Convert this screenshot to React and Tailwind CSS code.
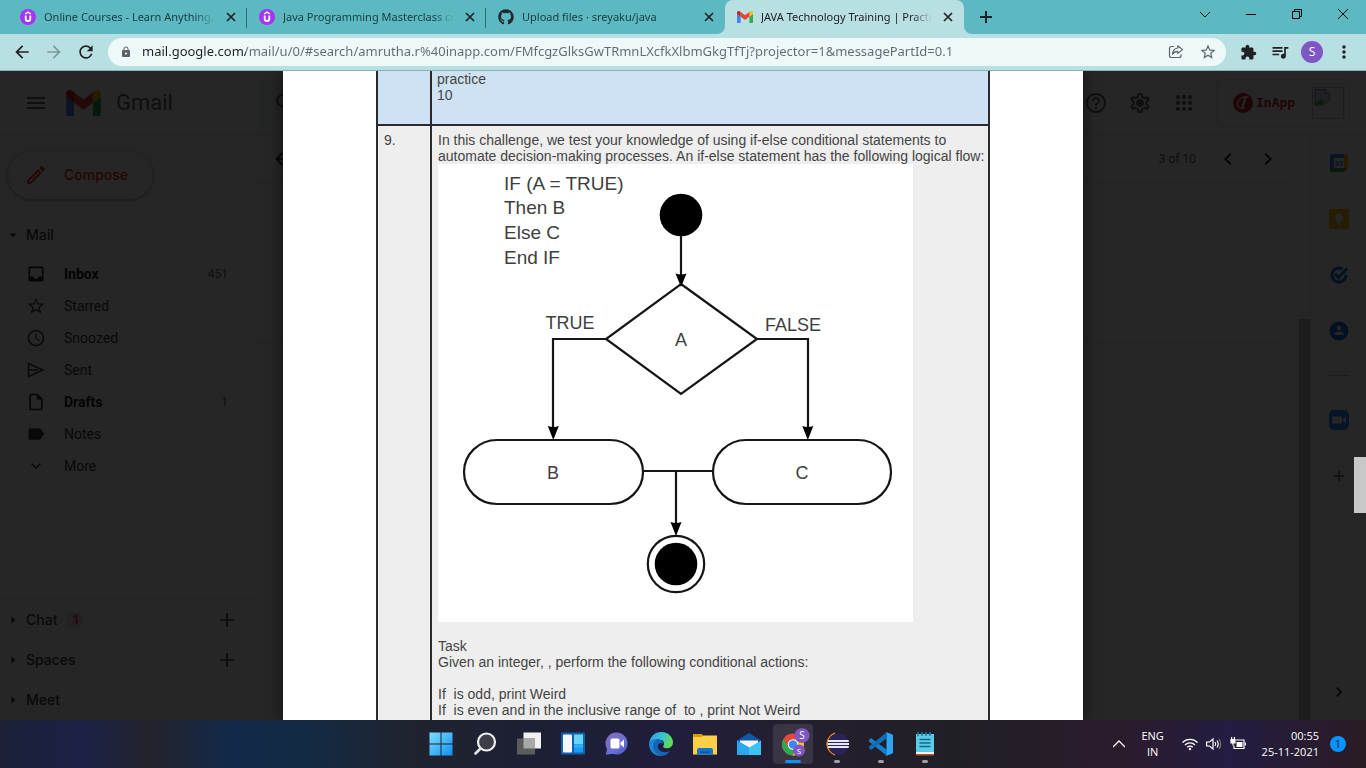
import React from "react";
import { FaGithub } from "react-icons/fa";
import {
  MdMenu, MdSearch, MdArrowBack, MdArrowForward, MdRefresh, MdLock, MdStarBorder, MdExtension,
  MdQueueMusic, MdMoreVert, MdAdd, MdInbox, MdAccessTime, MdOutlineInsertDriveFile, MdLabel,
  MdExpandMore, MdHelpOutline, MdOutlineSettings, MdChevronLeft, MdChevronRight, MdOutlineEdit,
  MdArrowRight, MdArrowDropDown,
} from "react-icons/md";

function UdemyIcon() {
  return (
    <svg viewBox="0 0 16 16" className="h-4 w-4 shrink-0" aria-hidden="true">
      <circle cx="8" cy="8" r="8" fill="#a435f0" />
      <path d="M5.2 5 8 3.2 10.8 5" fill="none" stroke="#fff" strokeWidth="1.4" />
      <path d="M5.7 6.4v3.4a2.3 2.3 0 0 0 4.6 0V6.4" fill="none" stroke="#fff" strokeWidth="1.8" />
    </svg>
  );
}

function GmailLogo({ className }) {
  return (
    <svg viewBox="52 42 88 66" className={className} aria-hidden="true">
      <path fill="#4285f4" d="M58 108h14V74L52 59v43c0 3.32 2.69 6 6 6" />
      <path fill="#34a853" d="M120 108h14c3.32 0 6-2.69 6-6V59l-20 15" />
      <path fill="#fbbc04" d="M120 48v26l20-15v-8c0-7.42-8.47-11.65-14.4-7.2" />
      <path fill="#ea4335" d="M72 74V48l24 18 24-18v26L96 92" />
      <path fill="#c5221f" d="M52 51v8l20 15V48l-5.6-4.2c-5.94-4.45-14.4-.22-14.4 7.2" />
    </svg>
  );
}

const TABS = [
  { title: "Online Courses - Learn Anything,", icon: <UdemyIcon /> },
  { title: "Java Programming Masterclass co", icon: <UdemyIcon /> },
  { title: "Upload files · sreyaku/java", icon: <FaGithub className="h-4 w-4 shrink-0 text-[#24292f]" /> },
  { title: "JAVA Technology Training | Practi", icon: <GmailLogo className="h-3 w-4 shrink-0" />, active: true },
];

function TabStrip() {
  return (
    <div className="flex h-[34px] shrink-0 bg-[#5cb8c1] pl-2">
      {TABS.map((t, i) => (
        <div
          key={i}
          className={
            "relative flex w-[239px] items-center gap-2 pr-2 pl-3 " +
            (t.active ? "rounded-t-lg bg-[#b8e0e3] text-[#202124]" : "text-[#173c40]")
          }
        >
          {t.icon}
          <span className="min-w-0 flex-1 overflow-hidden text-[11px] leading-4 whitespace-nowrap [font-family:'Noto_Sans',sans-serif] [mask-image:linear-gradient(to_right,black_88%,transparent)]">
            {t.title}
          </span>
          <button aria-label="Close tab" className="flex h-4 w-4 items-center justify-center text-[#202124]">
            <svg viewBox="0 0 10 10" className="h-[10px] w-[10px]" fill="none" stroke="currentColor" strokeWidth="1.7"><path d="M1 1l8 8M9 1L1 9" /></svg>
          </button>
          {i < 2 && <span className="absolute top-2 right-0 h-5 w-px bg-[#2f6b72]" />}
          {t.active && (
            <>
              <svg viewBox="0 0 8 8" className="absolute bottom-0 -left-2 h-2 w-2" fill="#b8e0e3"><path d="M8 0v8H0a8 8 0 0 0 8-8z" /></svg>
              <svg viewBox="0 0 8 8" className="absolute -right-2 bottom-0 h-2 w-2" fill="#b8e0e3"><path d="M0 0v8h8a8 8 0 0 1-8-8z" /></svg>
            </>
          )}
        </div>
      ))}
      <button aria-label="New tab" className="ml-3 flex w-5 items-center justify-center text-[#202124]">
        <svg viewBox="0 0 12 12" className="h-3 w-3" fill="none" stroke="currentColor" strokeWidth="2"><path d="M6 0v12M0 6h12" /></svg>
      </button>
      <div className="ml-auto flex text-black">
        <button aria-label="Search tabs" className="flex h-7 w-[46px] items-center justify-center">
          <svg viewBox="0 0 12 12" className="h-3 w-3" fill="none" stroke="currentColor"><path d="M1 4l5 5 5-5" /></svg>
        </button>
        <button aria-label="Minimize" className="flex h-7 w-[46px] items-center justify-center">
          <svg viewBox="0 0 10 10" className="h-[10px] w-[10px]" fill="none" stroke="currentColor"><path d="M0 5.5h10" /></svg>
        </button>
        <button aria-label="Restore" className="flex h-7 w-[46px] items-center justify-center">
          <svg viewBox="0 0 10 10" className="h-[10px] w-[10px]" fill="none" stroke="currentColor"><path d="M.5 2.5h7v7h-7zM2.5 2.5v-2h7v7h-2" /></svg>
        </button>
        <button aria-label="Close window" className="flex h-7 w-[46px] items-center justify-center">
          <svg viewBox="0 0 10 10" className="h-[10px] w-[10px]" fill="none" stroke="currentColor"><path d="M0 0l10 10M10 0L0 10" /></svg>
        </button>
      </div>
    </div>
  );
}

function BarButton({ label, children }) {
  return (
    <button aria-label={label} className="flex h-7 w-8 shrink-0 items-center justify-center text-[#202124]">
      {children}
    </button>
  );
}

function Toolbar() {
  return (
    <div className="flex h-[37px] shrink-0 items-center border-b border-[#86b3b6] bg-[#b8e0e3] px-[6px]">
      <BarButton label="Back"><MdArrowBack className="h-5 w-5" /></BarButton>
      <BarButton label="Forward"><MdArrowForward className="h-5 w-5 text-[#7f999b]" /></BarButton>
      <BarButton label="Reload"><MdRefresh className="h-5 w-5" /></BarButton>
      <div className="mx-[6px] flex h-7 min-w-0 flex-1 items-center rounded-full bg-[#edf8f9] pr-[2px] pl-3 text-[#5f6368]">
        <MdLock className="h-3 w-3 shrink-0" />
        <input
          aria-label="Address"
          readOnly
          value="mail.google.com/mail/u/0/#search/amrutha.r%40inapp.com/FMfcgzGlksGwTRmnLXcfkXlbmGkgTfTj?projector=1&messagePartId=0.1"
          className="ml-[10px] min-w-0 flex-1 bg-[linear-gradient(to_right,#202124_104px,#5f6b6e_104px)] bg-clip-text text-[13px] text-transparent outline-none [font-family:'Noto_Sans',sans-serif]"
        />
        <BarButton label="Share this page">
          <svg viewBox="0 0 16 16" className="h-4 w-4" fill="none" stroke="#5f6368" strokeWidth="1.2" strokeLinejoin="round">
            <path d="M6 2.5H3.5a2 2 0 0 0-2 2v7a2 2 0 0 0 2 2h7.500a2 2 0 0 0 2-2V10.500" />
            <path d="M9.800 1.800 14.500 5.600 9.800 9.400V7.300C7.200 7.300 5.600 8.200 4.500 10.200c.3-3.200 2-5.800 5.300-6.200z" />
          </svg>
        </BarButton>
        <BarButton label="Bookmark"><MdStarBorder className="h-[18px] w-[18px] text-[#5f6368]" /></BarButton>
      </div>
      <BarButton label="Extensions"><MdExtension className="h-[17px] w-[17px]" /></BarButton>
      <BarButton label="Media controls"><MdQueueMusic className="h-5 w-5" /></BarButton>
      <BarButton label="Profile">
        <span className="flex h-[22px] w-[22px] items-center justify-center rounded-full bg-[#7e57c2] text-xs text-white">S</span>
      </BarButton>
      <BarButton label="Menu"><MdMoreVert className="h-5 w-5" /></BarButton>
    </div>
  );
}

function SentIcon({ className }) {
  return (
    <svg viewBox="0 0 20 20" className={className} fill="none" stroke="currentColor" strokeWidth="1.600">
      <path d="M2.500 3.500 17 10 2.500 16.500zM2.500 10H12" />
    </svg>
  );
}

const FOLDERS = [
  { name: "Inbox", Icon: MdInbox, count: 451, bold: true },
  { name: "Starred", Icon: MdStarBorder },
  { name: "Snoozed", Icon: MdAccessTime },
  { name: "Sent", Icon: SentIcon },
  { name: "Drafts", Icon: MdOutlineInsertDriveFile, count: 1, bold: true },
  { name: "Notes", Icon: MdLabel },
  { name: "More", Icon: MdExpandMore },
];

const SECTIONS = [
  { name: "Chat", badge: 1, add: true },
  { name: "Spaces", add: true },
  { name: "Meet" },
];

function GmailHeader() {
  return (
    <header className="flex h-16 shrink-0 items-center border-b border-[#e8eaed] pr-4 pl-6 text-[#5f6368]">
      <button aria-label="Main menu"><MdMenu className="h-6 w-6" /></button>
      <GmailLogo className="ml-[18px] h-[26px] w-[35px]" />
      <span className="ml-[15px] text-[22px] leading-6 [font-family:Roboto,sans-serif]">Gmail</span>
      <label className="ml-21 flex h-12 w-[720px] items-center gap-2 rounded-lg bg-[#f1f3f4] pl-4">
        <MdSearch className="h-6 w-6" />
        <input aria-label="Search mail" className="min-w-0 flex-1 outline-none" />
      </label>
      <div className="ml-auto flex items-center gap-5">
        <button aria-label="Support"><MdHelpOutline className="h-6 w-6" /></button>
        <button aria-label="Settings">
          <svg viewBox="0 0 24 24" className="h-6 w-6"><MdOutlineSettings size={24} /><circle cx="12" cy="12" r="3.500" fill="currentColor" /></svg>
        </button>
        <button aria-label="Google apps">
          <svg viewBox="0 0 24 24" className="h-6 w-6" fill="currentColor">
            {[6, 12, 18].map((y) => [6, 12, 18].map((x) => <circle key={x + "-" + y} cx={x} cy={y} r="2" />))}
          </svg>
        </button>
      </div>
      <div className="ml-5 flex h-12 w-[134px] items-center justify-between rounded-lg border border-[#e0e2e5] pr-[5px] pl-4">
        <span className="flex items-center gap-[3px] text-[#c4262d]">
          <svg viewBox="0 0 20 20" className="h-5 w-5">
            <circle cx="10" cy="10" r="10" fill="#c4262d" />
            <path d="M15.500 4.500C11 2 4.500 6 4.500 11c0 4 4 5.500 7.500 3.500" fill="none" stroke="#fff" strokeWidth="1.200" />
            <path d="M11.500 7.500 9.500 14M12.300 4.500l-.3 1.200" stroke="#fff" strokeWidth="2.200" strokeLinecap="round" />
          </svg>
          <span className="text-[13px] font-bold [font-family:'DejaVu_Sans_Mono',monospace]">InApp</span>
        </span>
        <svg viewBox="0 0 32 32" className="h-8 w-8" role="img" aria-label="Profile photo">
          <path d="M.5.5h31v31H.5z" fill="none" stroke="#c0c0c0" />
          <path d="M3 2.500h10.500l4 4V13l-6 5H3z" fill="#c5d7f2" stroke="#888" />
          <path d="M3.500 17.500c2-5 6-6 9-3l-3 3z" fill="#4caf3c" />
          <path d="M13.500 2.500v4h4" fill="#fff" stroke="#888" />
        </svg>
      </div>
    </header>
  );
}

function Sidebar() {
  return (
    <nav className="flex w-64 shrink-0 flex-col text-[#3c4043] [font-family:Roboto,sans-serif]">
      <button className="mt-4 ml-2 flex h-12 w-[145px] shrink-0 items-center gap-4 rounded-full pl-4 text-sm font-medium text-[#d93025] shadow-[0_1px_3px_1px_rgba(60,64,67,0.4)] [font-family:Inter,sans-serif]">
        <MdOutlineEdit className="h-6 w-6" />
        Compose
      </button>
      <a href="#mail" className="mt-5 flex h-8 shrink-0 items-center pl-1 text-sm font-medium [font-family:Inter,sans-serif]">
        <MdArrowDropDown className="mr-1 h-[18px] w-[18px]" />
        Mail
      </a>
      <ul className="mt-[7px]">
        {FOLDERS.map(({ name, Icon, count, bold }) => (
          <li key={name}>
            <a href={"#" + name} className={"flex h-8 items-center pr-7 pl-[26px] text-sm " + (bold ? "font-bold text-[#202124]" : "")}>
              <Icon className="mr-[18px] h-5 w-5" />
              {name}
              {count && <span className="ml-auto text-xs font-normal text-[#5f6368]">{count}</span>}
            </a>
          </li>
        ))}
      </ul>
      <ul className="mt-[117px] border-t border-[#e8eaed] text-sm font-medium [font-family:Inter,sans-serif]">
        {SECTIONS.map((s) => (
          <li key={s.name} className="flex h-10 items-center pr-[18px] pl-1">
            <MdArrowRight className="mr-1 h-[18px] w-[18px]" />
            <a href={"#" + s.name}>{s.name}</a>
            {s.badge && (
              <span className="ml-[10px] flex h-4 w-4 items-center justify-center rounded-full bg-[#fad2cf] text-xs text-[#c5221f]">{s.badge}</span>
            )}
            {s.add && (
              <button aria-label={"New " + s.name} className="ml-auto flex h-[22px] w-[22px] items-center justify-center">
                <svg viewBox="0 0 14 14" className="h-[14px] w-[14px]" fill="none" stroke="currentColor" strokeWidth="1.600"><path d="M7 0v14M0 7h14" /></svg>
              </button>
            )}
          </li>
        ))}
      </ul>
    </nav>
  );
}

function SidePanel() {
  return (
    <aside className="flex w-14 shrink-0 flex-col items-center border-l border-[#e8eaed] pt-[18px] text-[#5f6368]">
      <button aria-label="Calendar" className="h-5 w-5">
        <svg viewBox="0 0 20 20">
          <path d="M1 3a2 2 0 0 1 2-2h12v4H5v10H1z" fill="#4285f4" />
          <path d="M15 1h2a2 2 0 0 1 2 2v12h-4z" fill="#fbbc04" />
          <path d="M1 15h14v4H3a2 2 0 0 1-2-2z" fill="#34a853" />
          <path d="M15 15h4l-4 4z" fill="#ea4335" />
          <path d="M5 5h10v10H5z" fill="#fff" />
          <text x="10" y="12.500" fontSize="7.500" fontWeight="bold" textAnchor="middle" fill="#1a73e8" fontFamily="Roboto, sans-serif">31</text>
        </svg>
      </button>
      <button aria-label="Keep" className="mt-9 h-5 w-5">
        <svg viewBox="0 0 20 20">
          <rect width="20" height="20" rx="2" fill="#fbbc04" />
          <circle cx="10" cy="9" r="4.200" fill="#fff" />
          <path d="M8 14.500h4v1.500H8z" fill="#fff" />
        </svg>
      </button>
      <button aria-label="Tasks" className="mt-9 h-5 w-5">
        <svg viewBox="0 0 20 20" fill="none" stroke="#1a73e8" strokeWidth="3">
          <path d="M13.500 4A7 7 0 1 0 16.900 9.500" />
          <path d="M6 9l3.500 3.500L18 3.500" />
        </svg>
      </button>
      <button aria-label="Contacts" className="mt-9 h-5 w-5">
        <svg viewBox="0 0 20 20">
          <circle cx="10" cy="10" r="9.500" fill="#1a73e8" />
          <circle cx="10" cy="7" r="2.300" fill="#fff" />
          <path d="M5.500 14v-1c0-1.800 3-2.600 4.500-2.600s4.500.8 4.500 2.600v1z" fill="#fff" />
        </svg>
      </button>
      <hr className="mt-[34px] w-5 border-[#bdc1c6]" />
      <button aria-label="Zoom for Gmail" className="mt-[34px] h-5 w-5">
        <svg viewBox="0 0 20 20">
          <rect width="20" height="20" rx="5" fill="#2d8cff" />
          <path d="M3 6.500h8.500a1.500 1.500 0 0 1 1.500 1.500v5.500H4.500A1.500 1.500 0 0 1 3 12zM14 9l3-2.500v7L14 11z" fill="#fff" />
        </svg>
      </button>
      <button aria-label="Get add-ons" className="mt-[37px]"><MdAdd className="h-[18px] w-[18px]" /></button>
      <button aria-label="Hide side panel" className="mt-auto mb-[18px] text-[#202124]"><MdChevronRight className="h-5 w-5" /></button>
    </aside>
  );
}

function GmailPage() {
  return (
    <div className="flex h-full flex-col overflow-hidden bg-white [font-family:Roboto,sans-serif]">
      <GmailHeader />
      <div className="flex min-h-0 flex-1">
        <Sidebar />
        <main className="flex min-w-0 flex-1 flex-col">
          <div className="mr-4 flex h-12 shrink-0 items-center border-b border-[#e8eaed] pr-[14px] pl-4 text-[#202124]">
            <button aria-label="Back to search results"><MdArrowBack className="h-5 w-5" /></button>
            <span className="ml-auto text-xs text-[#5f6368]">3 of 10</span>
            <button aria-label="Newer" className="ml-5"><MdChevronLeft className="h-6 w-6" /></button>
            <button aria-label="Older" className="ml-4"><MdChevronRight className="h-6 w-6" /></button>
          </div>
          <div className="mt-[136px] flex flex-1 justify-end">
            <div className="mt-6 mr-5 flex-1 border-t border-dotted border-[#dadce0]" />
            <div className="w-[11px] bg-[#c4c4c4]" />
          </div>
        </main>
        <SidePanel />
      </div>
    </div>
  );
}

function Flowchart() {
  return (
    <svg viewBox="438 164 475 458" className="block h-[458px] w-[475px] bg-white" fontFamily="'Liberation Sans', Arial, sans-serif">
      <g fill="none" stroke="#161616" strokeWidth="2.200">
        <path d="M681 236v42M681 284l76 55-76 55-75-55z" />
        <path d="M606 339h-53v92M757 339h51v92M643 471h70M676 471v56" />
        <rect x="464" y="440" width="179" height="64" rx="33" />
        <rect x="713" y="440" width="178" height="64" rx="33" />
        <circle cx="676" cy="564" r="28.200" />
      </g>
      <g fill="#000">
        <circle cx="681" cy="215" r="21.300" />
        <circle cx="676" cy="564" r="21.300" />
        <path d="M675.500 273.500q5.500 2 11 0L681 287zM547.800 426q5.500 2 11 0L553.300 440zM802.300 426q5.500 2 11 0L807.800 440zM670.500 522q5.500 2 11 0L676 536z" />
      </g>
      <g fill="#3f3f3f" fontSize="19">
        <text x="504" y="190">IF (A = TRUE)</text>
        <text x="504" y="214">Then B</text>
        <text x="504" y="239">Else C</text>
        <text x="504" y="264">End IF</text>
      </g>
      <g fill="#3f3f3f" fontSize="18" textAnchor="middle">
        <text x="570" y="329">TRUE</text>
        <text x="793" y="331">FALSE</text>
        <text x="681" y="346">A</text>
        <text x="553" y="479">B</text>
        <text x="802" y="479">C</text>
      </g>
    </svg>
  );
}

function DocumentViewer() {
  return (
    <div className="absolute inset-0 flex justify-center overflow-hidden bg-black/85">
      <div className="w-[800px] bg-white pl-[93px] shadow-[0_0_14px_rgba(0,0,0,0.6)]">
        <table className="w-[614px] table-fixed border-collapse text-sm leading-4 text-[#444] [font-family:'Liberation_Sans',Arial,sans-serif]">
          <tbody>
            <tr className="h-[54px] bg-[#cfe2f3] align-top">
              <td className="w-[54px] border-2 border-t-0 border-[#2b2b2e]" />
              <td className="border-2 border-t-0 border-[#2b2b2e] pr-1 pl-[5px]">
                <p>practice</p>
                <p>10</p>
              </td>
            </tr>
            <tr className="bg-[#eeeeee] align-top">
              <td className="border-2 border-[#2b2b2e] px-[6px] py-[6px]">9.</td>
              <td className="border-2 border-[#2b2b2e] py-[6px] pr-1 pl-[6px]">
                <p className="whitespace-nowrap">In this challenge, we test your knowledge of using if-else conditional statements to</p>
                <p className="whitespace-nowrap">automate decision-making processes. An if-else statement has the following logical flow:</p>
                <Flowchart />
                <p className="mt-4">Task</p>
                <p>Given an integer, , perform the following conditional actions:</p>
                <p className="mt-4 whitespace-pre">If  is odd, print Weird</p>
                <p className="whitespace-pre">If  is even and in the inclusive range of  to , print Not Weird</p>
              </td>
            </tr>
          </tbody>
        </table>
      </div>
      <div className="absolute top-[386px] right-0 h-14 w-3 bg-[#c8c8c8]" />
    </div>
  );
}

const APPS = [
  {
    name: "Start",
    art: (
      <>
        <defs><linearGradient id="win" x1="0" y1="0" x2="1" y2="1"><stop offset="0" stopColor="#7fe0fb" /><stop offset="1" stopColor="#0f8ff0" /></linearGradient></defs>
        <path d="M.5.5h11v11H.5zM12.500.5h11v11h-11zM.5 12.500h11v11H.5zM12.500 12.500h11v11h-11z" fill="url(#win)" />
      </>
    ),
  },
  {
    name: "Search",
    art: (
      <>
        <circle cx="13.500" cy="10" r="8.500" fill="#3c3f47" stroke="#eef0f3" strokeWidth="2.200" />
        <path d="M7.500 16.500 2.500 21.500" stroke="#e4e6ea" strokeWidth="2.600" strokeLinecap="round" />
      </>
    ),
  },
  {
    name: "Task View",
    art: (
      <>
        <path d="M6.500.5h17.500v16H6.500z" fill="#f1f1f1" />
        <path d="M0 6.500h18v16H0z" fill="#5c5c5c" />
        <path d="M6.500 6.500H18v10H6.500z" fill="#a8a8a8" />
      </>
    ),
  },
  {
    name: "Widgets",
    art: (
      <>
        <rect y=".5" width="24" height="22" rx="1" fill="#0f62ae" />
        <rect x="2" y="2.500" width="9" height="18" rx="1" fill="#f4f6f8" />
        <path d="M13 2.500h9v10h-9z" fill="#6ad4ff" />
        <path d="M13 12.500h9V20.500h-9z" fill="#1c9bf2" />
        <path d="M13 12.500h9v3h-9z" fill="#2fb0f8" />
      </>
    ),
  },
  {
    name: "Chat",
    art: (
      <>
        <defs><linearGradient id="chat" x1="0" y1="0" x2="1" y2="1"><stop offset="0" stopColor="#8b6bb0" /><stop offset=".6" stopColor="#6a6fd8" /><stop offset="1" stopColor="#4a52c0" /></linearGradient></defs>
        <path d="M12 .5a11 11 0 1 1-4.500 21.200L.8 22.800 2 17A11 11 0 0 1 12 .5z" fill="url(#chat)" />
        <rect x="5.500" y="6.500" width="9" height="10" rx="1.500" fill="#fff" />
        <path d="M15.500 10.500 19 7.500v8l-3.500-3z" fill="#fff" />
      </>
    ),
  },
  {
    name: "Edge",
    art: (
      <>
        <defs>
          <linearGradient id="edgeTop" x1="0" y1="0" x2="1" y2=".3"><stop offset="0" stopColor="#2a9fe0" /><stop offset=".55" stopColor="#35c1d8" /><stop offset="1" stopColor="#5edb55" /></linearGradient>
        </defs>
        <path d="M.2 11C1 4.500 6 0 12.200 0 19 0 24 5 24 10.300c0 4-3 6-6.300 6-2.700 0-4.200-1-3.200-2.500 1.500-2.300.3-6-4-6C5.500 7.800 1 9 .2 11z" fill="url(#edgeTop)" />
        <path d="M.2 11C1.500 7.500 5.500 6.500 9 7c3.500.5 5.500 2.800 5.300 5.200-2-2.200-5.500-1.200-5.500 2.300 0 4.200 5.500 7.500 12.200 4.500-2 3-5.300 5-9 5C5 24-.5 18 .2 11z" fill="#1467b8" />
        <path d="M4 13.500c0-3 2-5.500 5-6.500-3.800-.3-8 1-8.800 4C-.4 18 5 24 12 24c-5-1-8-5.500-8-10.500z" fill="#1d87d8" />
      </>
    ),
  },
  {
    name: "File Explorer",
    art: (
      <>
        <path d="M0 2h9l2 3h-11z" fill="#d99a06" />
        <path d="M0 5h8.500l2-1.500H24v19H0z" fill="#ffcf48" />
        <path d="M4 22.500V18a2 2 0 0 1 2-2h12a2 2 0 0 1 2 2v4.500z" fill="#1275c9" />
        <path d="M7.500 19.500h9V21h-9z" fill="#0b5596" />
      </>
    ),
  },
  {
    name: "Mail",
    art: (
      <>
        <path d="M0 8.500 12 1l12 7.500v6H0z" fill="#0c59a8" />
        <path d="M3 8.500h18v8H3z" fill="#f3f6f9" />
        <path d="M0 8.500 24 22.500V23H0z" fill="#1d9be8" />
        <path d="M24 8.500v14.500H0z" fill="#3cc3f5" />
        <path d="M0 8.500l12 7v7.500H0z" fill="#2aa8ee" />
      </>
    ),
  },
  {
    name: "Google Chrome",
    active: true,
    art: (
      <>
        <circle cx="12" cy="12.500" r="11" fill="#e9453a" />
        <path d="M2.500 7A11 11 0 0 0 11.500 23.500L16.500 15h-9z" fill="#2da94f" />
        <path d="M12 7.500h9.800A11 11 0 0 1 11.500 23.500L17 14z" fill="#fcc31e" />
        <circle cx="12" cy="12.500" r="5.200" fill="#fff" />
        <circle cx="12" cy="12.500" r="4.200" fill="#3f86f4" />
        <circle cx="21" cy="3.500" r="7.500" fill="#7e57c2" />
        <text x="21" y="7.200" fontSize="10" textAnchor="middle" fill="#fff">S</text>
        <circle cx="18" cy="18.500" r="6" fill="#7e57c2" />
        <text x="18" y="21.500" fontSize="8" textAnchor="middle" fill="#fff">S</text>
      </>
    ),
  },
  {
    name: "Eclipse",
    running: true,
    art: (
      <>
        <path d="M10 1A11.500 11.500 0 0 0 10 23 13.500 13.500 0 0 1 10 1z" fill="#f7941e" stroke="#f7941e" />
        <circle cx="13.500" cy="12" r="10.800" fill="#2c2255" />
        <path d="M3 9h20.700M2.500 12H24M3 15h20.700" stroke="#e8e6f0" strokeWidth="2" />
      </>
    ),
  },
  {
    name: "Visual Studio Code",
    running: true,
    art: (
      <>
        <path d="M17.500 0 24 3v18l-6.500 3z" fill="#2aa7f2" />
        <path d="M0 8 2 6l16 12v6L0 9.500z" fill="#1580cc" />
        <path d="M0 16 2 18 18 6V0L0 14.500z" fill="#0f6db8" />
      </>
    ),
  },
  {
    name: "Notepad",
    running: true,
    art: (
      <>
        <path d="M3 2h18v20H3z" fill="#5ccbe8" />
        <path d="M5 0v4M9 0v4M13 0v4M17 0v4" stroke="#1a7f9c" strokeWidth="1.500" />
        <path d="M6.500 7.500h11M6.500 11h11M6.500 14.500h11" stroke="#0f6a86" strokeWidth="1.600" />
        <path d="M3 20h18v2H3z" fill="#f2f2f2" />
        <path d="M3 22h18v1.500H3z" fill="#b4561b" />
      </>
    ),
  },
];

function Taskbar() {
  return (
    <footer className="grid h-12 shrink-0 grid-cols-[1fr_auto_1fr] items-center bg-[linear-gradient(to_right,#1c2138_0%,#1a2145_6%,#22232b_11%,#12294a_17%,#132a42_23%,#1f232f_30%,#1c1f36_42%,#211e3c_50%,#241f2e_58%,#211f26_70%,#2b1c2c_82%,#241c42_90%,#2a1c24_100%)]">
      <div />
      <div className="flex gap-1">
        {APPS.map((a) => (
          <button
            key={a.name}
            aria-label={a.name}
            className={"relative flex h-10 w-10 items-center justify-center rounded " + (a.active ? "bg-white/10" : "")}
          >
            <svg viewBox="0 0 24 24" className="h-6 w-6 overflow-visible" fontFamily="'Open Sans', sans-serif">{a.art}</svg>
            {a.active && <span className="absolute bottom-[1px] h-[3px] w-4 rounded-full bg-[#0a92ff]" />}
            {a.running && <span className="absolute bottom-[1px] h-[3px] w-[6px] rounded-full bg-[#a0a0a4]" />}
          </button>
        ))}
      </div>
      <div className="flex items-center justify-end pr-5 text-[11px] leading-4 text-white">
        <button aria-label="Show hidden icons" className="mr-4">
          <svg viewBox="0 0 12 12" className="h-3 w-3" fill="none" stroke="currentColor" strokeWidth="1.300"><path d="M0 9l6-6 6 6" /></svg>
        </button>
        <button className="mr-[17px] w-6 text-center">ENG<br />IN</button>
        <button aria-label="Network, volume and battery" className="mr-4 flex items-center gap-2">
          <svg viewBox="0 0 16 14" className="h-[14px] w-4" fill="none" stroke="currentColor" strokeWidth="1.300">
            <path d="M.5 5.500a10.500 10.500 0 0 1 15 0M3 8a7 7 0 0 1 10 0M5.300 10.300a3.800 3.800 0 0 1 5.400 0" />
            <circle cx="8" cy="12" r="1.200" fill="currentColor" stroke="none" />
          </svg>
          <svg viewBox="0 0 16 14" className="h-[14px] w-4" fill="none" stroke="currentColor" strokeWidth="1.200">
            <path d="M.6 5h2.900L7 2v10L3.500 9H.6z" />
            <path d="M9 5q1.500 2 0 4M11 3.500q2.500 3.500 0 7" />
            <path d="M13 2q3.500 5 0 10" stroke="#777" />
          </svg>
          <svg viewBox="0 0 16 14" className="h-[14px] w-4" fill="none" stroke="currentColor" strokeWidth="1.200">
            <path d="M6 3h8v8.500H4V8.500" />
            <path d="M6.500 5h6v5h-6z" fill="currentColor" stroke="none" />
            <path d="M1 2.500h4V6H1z" fill="currentColor" />
            <path d="M1.600 0v3M4.400 0v3M3 6v2.500M15.300 5.500v3" />
          </svg>
        </button>
        <div className="mr-[11px] text-right">00:55<br />25-11-2021</div>
        <span className="flex h-4 w-4 items-center justify-center rounded-full bg-[#0a92ff] text-[#10243c]">1</span>
      </div>
    </footer>
  );
}

export default function App() {
  return (
    <div className="flex h-screen flex-col overflow-hidden [font-family:'Open_Sans',sans-serif]">
      <TabStrip />
      <Toolbar />
      <div className="relative min-h-0 flex-1">
        <GmailPage />
        <DocumentViewer />
      </div>
      <Taskbar />
    </div>
  );
}
